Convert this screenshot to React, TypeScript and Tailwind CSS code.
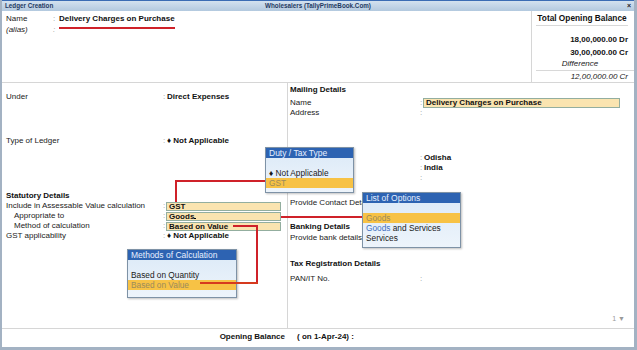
import React from 'react';

const Field = ({ children }: { children: React.ReactNode }) => (
  <div className="w-[115px] h-[9px] mt-px border border-[#93ae9f] bg-[#fae4b0] px-[2px] leading-[8px] font-bold text-[#111] whitespace-nowrap">
    {children}
  </div>
);

const Popup = ({ pos, title, children }: { pos: string; title: string; children: React.ReactNode }) => (
  <div className={`absolute ${pos} border border-[#7e92a6] bg-linear-to-b from-[#dbe9f7] to-[#edf4fb] shadow-[1px_1px_2px_rgba(0,0,0,0.25)]`}>
    <div className="h-[10px] bg-[#2d63b2] text-[#e6efff] text-[8.5px] leading-[10px] px-[3px] whitespace-nowrap">{title}</div>
    <div className="h-[10px]" />
    {children}
  </div>
);

const Item = ({ children, active }: { children: React.ReactNode; active?: boolean }) => (
  <div className={`h-[10px] leading-[10px] px-[3px] text-[8.3px] whitespace-nowrap ${active ? 'bg-[#f7c245] text-[#9b8b5c]' : 'text-[#1a1a1a]'}`}>
    {children}
  </div>
);

export default function App() {
  return (
    <div className="relative w-[637px] h-[350px] overflow-hidden bg-white font-['Liberation_Sans',Arial,sans-serif] text-[8px] leading-[10px] text-[#222]">
      <div className="h-full flex flex-col border-l-2 border-r-[3px] border-b-[3px] border-[#a3b2c3]">
        {/* title bar */}
        <div className="h-[11px] flex items-center border-t border-[#3b6cb4] bg-linear-to-b from-[#d3e1ef] to-[#b3c9df] text-[6.3px] font-bold text-[#1f3a62] leading-[10px]">
          <div className="flex-1 pl-[3px]">Ledger Creation</div>
          <div>Wholesalers (TallyPrimeBook.Com)</div>
          <div className="flex-1 text-right pr-[3px] text-[7px] text-[#222]">×</div>
        </div>

        {/* top section */}
        <div className="h-[72px] flex border-b border-[#d6d6d6]">
          <div className="flex-1 pl-[4px] pt-[2px]">
            <div className="flex h-[12px] items-center">
              <span className="w-[47px]">Name</span>
              <span className="w-[6px] text-[#999]">:</span>
              <span className="font-bold text-[#111]">Delivery Charges on Purchase</span>
            </div>
            <div className="flex h-[10px] italic">
              <span className="w-[47px]">(alias)</span>
              <span className="text-[#999]">:</span>
            </div>
          </div>
          <div className="w-[103px] border-l border-[#d6d6d6] pr-[6px] text-right">
            <div className="mt-[2px] ml-[4px] border-b border-[#d8d8d8] pb-[2px] font-bold text-[8.3px] text-center text-[#111]">Total Opening Balance</div>
            <div className="mt-[9px] font-bold text-[#111]">18,00,000.00 Dr</div>
            <div className="mt-[3px] font-bold text-[#111]">30,00,000.00 Cr</div>
            <div className="mt-px italic text-center">Difference</div>
            <div className="ml-[4px] mr-[-6px] pr-[6px] border-t border-[#d8d8d8] mt-px pt-px italic">12,00,000.00 Cr</div>
          </div>
        </div>

        {/* body */}
        <div className="flex-1 flex">
          <div className="w-[286px] border-r border-[#d6d6d6] pl-[4px]">
            <div className="mt-[9px] flex">
              <span className="w-[157px]">Under</span>
              <span className="w-[4px] text-[#999]">:</span>
              <span className="font-bold text-[#111]">Direct Expenses</span>
            </div>
            <div className="mt-[34px] flex">
              <span className="w-[157px]">Type of Ledger</span>
              <span className="w-[4px] text-[#999]">:</span>
              <span className="font-bold text-[#111]">♦ Not Applicable</span>
            </div>
            <div className="mt-[45px] font-bold text-[#111]">Statutory Details</div>
            <div className="flex h-[10px]">
              <span className="w-[157px]">Include in Assessable Value calculation</span>
              <span className="w-[3px] text-[#999]">:</span>
              <Field>GST</Field>
            </div>
            <div className="flex h-[10px]">
              <span className="w-[157px] pl-[8px]">Appropriate to</span>
              <span className="w-[3px] text-[#999]">:</span>
              <Field>
                Goods<span className="inline-block w-[2px] h-px bg-black align-baseline" />
              </Field>
            </div>
            <div className="flex h-[10px]">
              <span className="w-[157px] pl-[8px]">Method of calculation</span>
              <span className="w-[3px] text-[#999]">:</span>
              <Field>Based on Value</Field>
            </div>
            <div className="flex">
              <span className="w-[157px]">GST applicability</span>
              <span className="w-[4px] text-[#999]">:</span>
              <span className="font-bold text-[#111]">♦ Not Applicable</span>
            </div>
          </div>

          <div className="flex-1 flex flex-col pl-[2px]">
            <div className="mt-[2px] font-bold text-[#111]">Mailing Details</div>
            <div className="mt-[3px] flex h-[10px]">
              <span className="w-[130px]">Name</span>
              <span className="w-[3px] text-[#999]">:</span>
              <div className="w-[197px] h-[10px] border border-[#93ae9f] bg-[#fae4b0] px-[2px] leading-[8px] font-bold text-[#111]">Delivery Charges on Purchase</div>
            </div>
            <div className="flex">
              <span className="w-[130px]">Address</span>
              <span className="text-[#999]">:</span>
            </div>
            <div className="mt-[35px] flex">
              <span className="w-[130px]" />
              <span className="w-[4px] text-[#999]">:</span>
              <span className="font-bold text-[#111]">Odisha</span>
            </div>
            <div className="flex">
              <span className="w-[130px]" />
              <span className="w-[4px] text-[#999]">:</span>
              <span className="font-bold text-[#111]">India</span>
            </div>
            <div className="flex">
              <span className="w-[130px]" />
              <span className="text-[#999]">:</span>
            </div>
            <div className="mt-[7px] h-[8px]" />
            <div className="flex">
              <span className="w-[72px] whitespace-nowrap overflow-hidden">Provide Contact Details</span>
            </div>
            <div className="mt-[14px] font-bold text-[#111]">Banking Details</div>
            <div className="mt-px flex">
              <span className="w-[72px] whitespace-nowrap overflow-hidden">Provide bank details</span>
            </div>
            <div className="mt-[16px] font-bold text-[#111]">Tax Registration Details</div>
            <div className="mt-[5px] flex">
              <span className="w-[130px]">PAN/IT No.</span>
              <span className="text-[#999]">:</span>
            </div>
            <div className="mt-auto mb-[4px] pr-[9px] text-right text-[7px] text-[#999]">1 ▼</div>
          </div>
        </div>

        {/* bottom bar */}
        <div className="h-[19px] flex border-t border-[#d6d6d6] pt-[3px] font-bold text-[#111]">
          <div className="w-[283px] text-right">Opening Balance</div>
          <div className="ml-[12px]">( on 1-Apr-24) :</div>
        </div>
      </div>

      {/* popups */}
      <Popup pos="left-[265px] top-[147px] w-[89px] h-[46px]" title="Duty / Tax Type">
        <Item>♦ Not Applicable</Item>
        <Item active>GST</Item>
      </Popup>
      <Popup pos="left-[362px] top-[192px] w-[99px] h-[56px]" title="List of Options">
        <Item active>Goods</Item>
        <Item>
          <span className="text-[#3c6fc0]">Goods</span> and Services
        </Item>
        <Item>Services</Item>
      </Popup>
      <Popup pos="left-[127px] top-[249px] w-[110px] h-[49px]" title="Methods of Calculation">
        <Item>Based on Quantity</Item>
        <Item active>Based on Value</Item>
      </Popup>

      {/* red annotation lines */}
      <div className="absolute left-[59px] top-[27px] w-[116px] h-[2px] bg-[#cf2129]" />
      <div className="absolute left-[175px] top-[180px] w-[2px] h-[22px] bg-[#cf2129]" />
      <div className="absolute left-[175px] top-[180px] w-[90px] h-[2px] bg-[#cf2129]" />
      <div className="absolute left-[281px] top-[216px] w-[81px] h-[2px] bg-[#cf2129]" />
      <div className="absolute left-[233px] top-[225px] w-[25px] h-[2px] bg-[#cf2129]" />
      <div className="absolute left-[256px] top-[225px] w-[2px] h-[59px] bg-[#cf2129]" />
      <div className="absolute left-[200px] top-[282px] w-[58px] h-[2px] bg-[#d63a1e]" />
    </div>
  );
}
